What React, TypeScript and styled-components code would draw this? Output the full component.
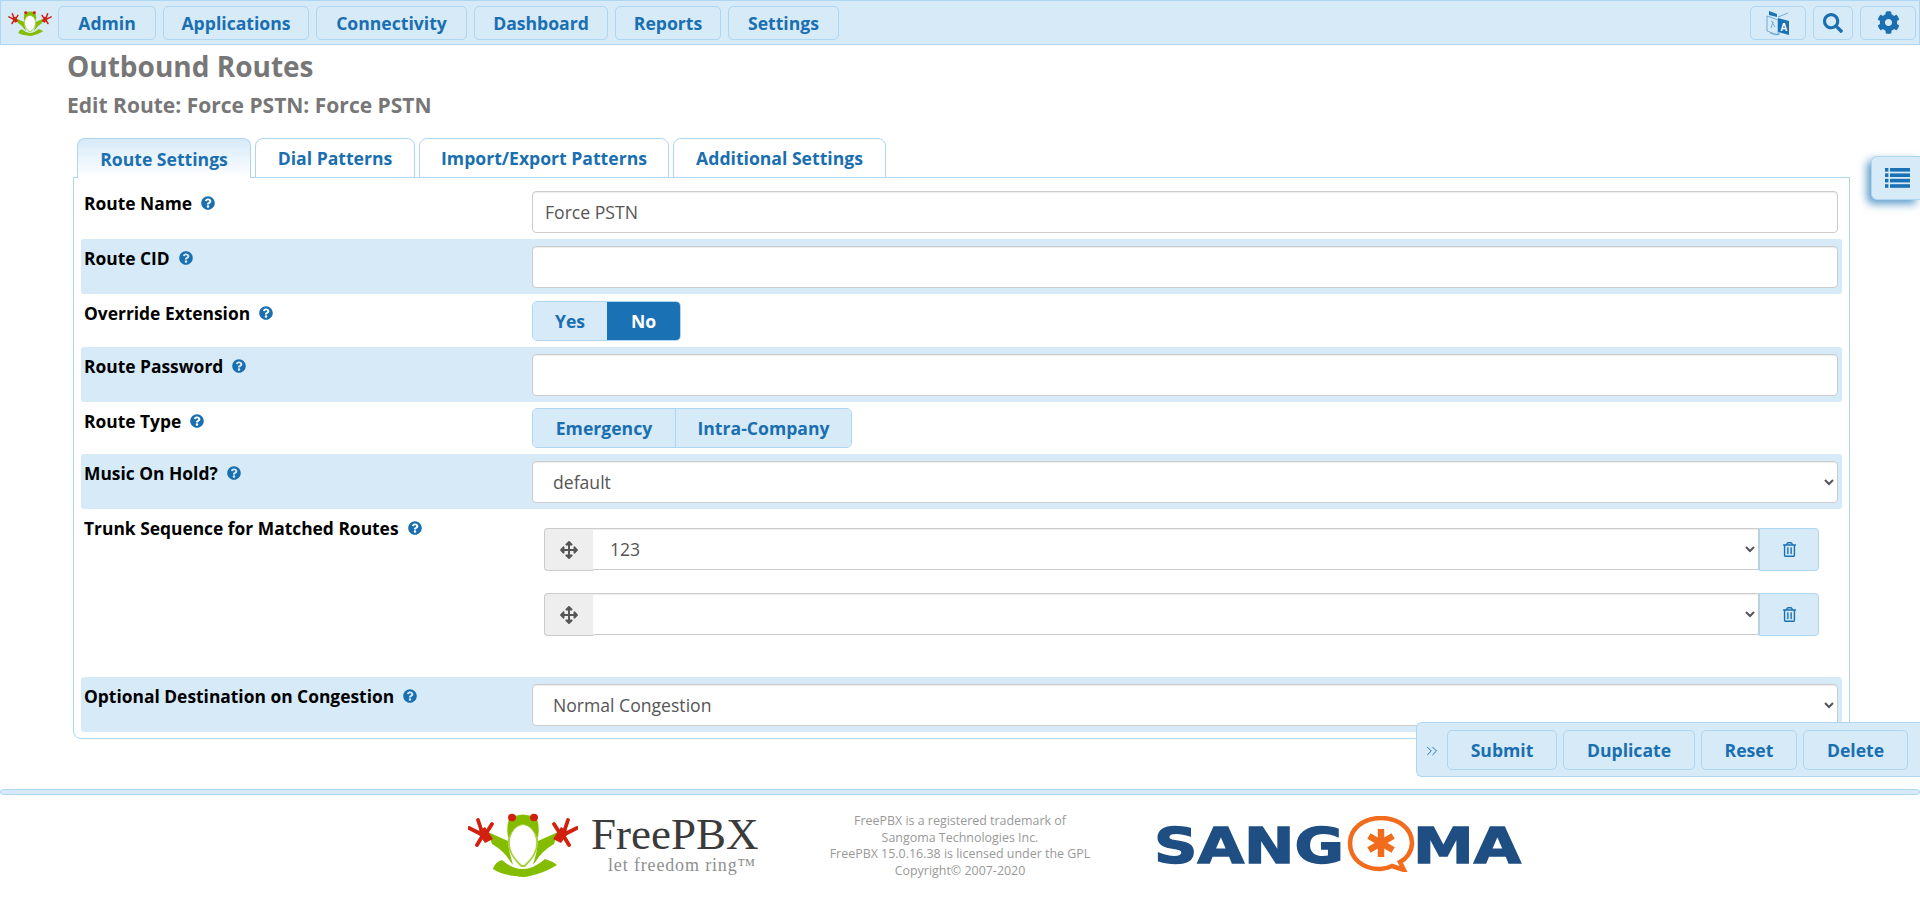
import styled, { createGlobalStyle } from 'styled-components'
import { FaQuestionCircle, FaSearch, FaCog, FaArrowsAlt, FaRegTrashAlt } from 'react-icons/fa'
import { ChevronsRight } from 'lucide-react'

const GlobalStyle = createGlobalStyle`
  html, body {
    margin: 0;
    padding: 0;
    background: #fff;
    font-family: "Open Sans", "Liberation Sans", sans-serif;
    overflow: hidden;
  }
  * { box-sizing: border-box; }
`

const Page = styled.div`
  position: relative;
  height: 913px;
  overflow: hidden;
`

const TopBar = styled.div`
  display: flex;
  align-items: center;
  height: 45px;
  padding: 0 3px 0 7px;
  background: #d6eaf8;
  border: 1px solid #aed6f1;
`

const NavLogo = styled.div`
  display: flex;
  width: 50px;
  margin-top: 1px;
`

const NavGroup = styled.div`
  display: flex;
  gap: 7px;
  margin-right: ${p => (p.$push ? 'auto' : '0')};
`

const NavButton = styled.div`
  display: flex;
  align-items: center;
  justify-content: center;
  width: ${p => p.$w}px;
  height: 34px;
  border: 1px solid #aed6f1;
  border-radius: 5px;
  background: #d6eaf8;
  color: #1a6fb0;
  font-size: ${p => p.$size || 17.6}px;
  font-weight: 700;
`

const Header = styled.div`
  padding: 0 0 0 67px;
`

const Title = styled.h1`
  margin: 0;
  padding-top: 3px;
  height: 40px;
  font-size: 28px;
  line-height: 36px;
  font-weight: 700;
  color: #777;
`

const SubTitle = styled.h2`
  margin: 0;
  height: 53px;
  padding-top: 7px;
  font-size: 21px;
  line-height: 26px;
  font-weight: 700;
  color: #777;
`

const Tabs = styled.div`
  display: flex;
  gap: 4px;
  margin-left: 77px;
  position: relative;
  z-index: 1;
`

const Tab = styled.div`
  display: flex;
  align-items: center;
  justify-content: center;
  width: ${p => p.$w}px;
  height: 40px;
  border: 1px solid #aed6f1;
  border-bottom: ${p => (p.$active ? '0' : '1px solid #aed6f1')};
  border-radius: 8px 8px 0 0;
  background: ${p => (p.$active ? 'linear-gradient(#d6eaf8, #fff)' : '#fff')};
  color: #1a6fb0;
  font-size: 17.6px;
  font-weight: 700;
`

const Panel = styled.div`
  width: 1777px;
  margin: -1px 0 0 73px;
  padding: 6px 7px 6px;
  border: 1px solid #aed6f1;
  border-radius: 0 0 8px 8px;
`

const Row = styled.div`
  display: grid;
  grid-template-columns: 448px 1fr;
  height: ${p => p.$h}px;
  padding: 6px 4px 0 3px;
  border-radius: 3px;
  background: ${p => (p.$shade ? '#d6eaf8' : 'transparent')};
`

const Label = styled.div`
  display: flex;
  align-items: center;
  gap: 9px;
  height: 24px;
  margin-top: 1px;
  font-size: 17.4px;
  font-weight: 700;
  white-space: nowrap;
  color: #000;
  svg { color: #1a6fb0; font-size: 14px; }
`

const TextInput = styled.input`
  width: 100%;
  height: 42px;
  margin-top: 1px;
  padding: 0 12px;
  border: 1px solid #ccc;
  border-radius: 4px;
  background: #fff;
  box-shadow: inset 0 1px 1px rgba(0, 0, 0, 0.075);
  color: #555;
  font-family: inherit;
  font-size: 17.6px;
  outline: none;
`

const Select = styled.select`
  width: 100%;
  height: 42px;
  margin-top: 1px;
  padding: 0 ${p => (p.$pad ? p.$pad : 16)}px;
  border: 1px solid #ccc;
  border-radius: 4px;
  background-color: #fff;
  box-shadow: inset 0 1px 1px rgba(0, 0, 0, 0.075);
  color: #555;
  font-family: inherit;
  font-size: 17.6px;
  outline: none;
`

const Toggle = styled.div`
  display: flex;
  width: max-content;
  height: 40px;
  margin-top: ${p => p.$mt || 0}px;
  border: 1px solid #aed6f1;
  border-radius: 5px;
  overflow: hidden;
`

const ToggleItem = styled.div`
  display: flex;
  align-items: center;
  justify-content: center;
  width: ${p => p.$w}px;
  background: ${p => (p.$on ? '#1a72b5' : '#d6eaf8')};
  color: ${p => (p.$on ? '#fff' : '#1a6fb0')};
  border-left: ${p => (p.$split ? '1px solid #aed6f1' : '0')};
  font-size: 17.6px;
  font-weight: 700;
`

const TrunkList = styled.div`
  display: flex;
  flex-direction: column;
  gap: 22px;
  padding: 13px 19px 0 12px;
`

const TrunkGroup = styled.div`
  display: flex;
  height: 43px;
`

const DragHandle = styled.div`
  display: flex;
  flex: 0 0 49px;
  align-items: center;
  justify-content: center;
  border: 1px solid #ccc;
  border-right: 0;
  border-radius: 4px 0 0 4px;
  background: #eee;
  color: #555;
  font-size: 18px;
`

const TrunkSelect = styled(Select)`
  flex: 1;
  width: auto;
  min-width: 0;
  height: 42px;
  margin-top: 0;
  border-left: 0;
  border-radius: 0;
`

const TrashAddon = styled.div`
  display: flex;
  flex: 0 0 60px;
  align-items: center;
  justify-content: center;
  border: 1px solid #aed6f1;
  border-radius: 0 4px 4px 0;
  background: #d6eaf8;
  color: #1a72b5;
  font-size: 15px;
`

const SideTab = styled.div`
  position: absolute;
  top: 156px;
  right: 0;
  display: flex;
  align-items: center;
  justify-content: flex-end;
  width: 49px;
  height: 44px;
  padding-right: 10px;
  border: 1px solid #aed6f1;
  border-right: 0;
  border-radius: 6px 0 0 6px;
  background: #d6eaf8;
  box-shadow: -4px 4px 8px rgba(26, 114, 181, 0.7);
`

const ActionBar = styled.div`
  position: absolute;
  top: 722px;
  right: 0;
  display: flex;
  align-items: center;
  gap: 6px;
  width: 504px;
  height: 55px;
  padding-left: 6px;
  border: 1px solid #aed6f1;
  border-right: 0;
  border-radius: 6px 0 0 6px;
  background: #d6eaf8;
  z-index: 2;
`

const CollapseArrow = styled.div`
  display: flex;
  width: 18px;
  margin-top: 2px;
  margin-right: 0;
  color: #1a72b5;
`

const ActionButton = styled(NavButton)`
  height: 40px;
`

const FooterBar = styled.div`
  height: 6px;
  margin-top: 50px;
  border: 1px solid #aed6f1;
  border-radius: 3px;
  background: #d6eaf8;
`

const Footer = styled.div`
  display: flex;
  align-items: flex-start;
  padding: 18px 0 0 468px;
`

const FreePbxLogo = styled.div`
  display: flex;
  gap: 13px;
  width: 288px;
`

const BrandText = styled.div`
  display: flex;
  flex-direction: column;
`

const BrandName = styled.div`
  height: 43px;
  font-family: "Liberation Serif", serif;
  font-size: 45px;
  line-height: 42px;
  color: #3b3b3b;
`

const BrandTag = styled.div`
  margin-left: 17px;
  font-family: "Liberation Serif", serif;
  font-size: 18px;
  line-height: 18px;
  letter-spacing: 0.85px;
  white-space: nowrap;
  color: #8f8f8f;
`

const Legal = styled.div`
  width: 270px;
  margin: 0 62px 0 69px;
  text-align: center;
  font-size: 12.45px;
  line-height: 16.7px;
  white-space: nowrap;
  color: #999;
`

const SangomaSvg = styled.svg`
  display: block;
  margin-top: 3px;
  margin-left: -3px;
`

function Frog({ width, height }: { width: number; height: number }) {
  const hand = (
    <g stroke="#d2200f" strokeWidth="3.8" strokeLinecap="round" fill="#d2200f">
      <path d="M9 19 L17 14 L25 26 L17 30 Z" stroke="none" />
      <path d="M15 22 L1 15 M15 22 L10 7 M17 22 L24 11 M15 22 L9 32" fill="none" />
    </g>
  )
  const arm = <path d="M20 19 L40 28 Q41 40 45 52 L42 48 Q36 38 24 31 Z" fill="#84bd00" />
  return (
    <svg width={width} height={height} viewBox="0 0 110 64" style={{ flex: 'none' }}>
      {arm}
      <g transform="translate(110 0) scale(-1 1)">{arm}</g>
      <path d="M55 11 Q67 12 70 26 Q72 40 57 54 L53 54 Q38 40 40 26 Q43 12 55 11 Z" fill="#a4d13c" />
      <path d="M55 12 Q65 13 68 26 Q70 40 56 52 L54 52 Q40 40 42 26 Q45 13 55 12 Z" fill="#fff" />
      <path d="M40 25 Q38 10 42 5 Q55 -2 68 5 Q72 10 70 25 Q64 12 55 11 Q46 12 40 25 Z" fill="#84bd00" />
      <path
        d="M25 56 Q27 49 34 47 Q44 56 54 56 Q66 56 77 46 Q84 48 89 52 Q76 60 62 63 Q55 65 48 63 Q34 62 25 56 Z"
        fill="#84bd00"
      />
      {hand}
      <g transform="translate(110 0) scale(-1 1)">{hand}</g>
      <ellipse cx="44" cy="4.5" rx="4" ry="3.8" fill="#d2200f" />
      <ellipse cx="66" cy="4.5" rx="4" ry="3.8" fill="#d2200f" />
    </svg>
  )
}

function TranslateIcon() {
  return (
    <svg width="24" height="26" viewBox="0 0 24 26">
      <path d="M1 6 L12 10 V25 L1 21 Z" fill="none" stroke="#5b9bd0" strokeWidth="0.8" />
      <path d="M3 1 L11 4 V7 L3 5 Z" fill="#1a72b5" />
      <path d="M12 7 L22 3 V3" fill="none" stroke="#5b9bd0" strokeWidth="0.8" />
      <path d="M12 8 L23 11 V25 L12 22 Z" fill="#1a72b5" />
      <path d="M5 11 L8 13 M7 12 L5 18 M7 14 L9 17" fill="none" stroke="#5b9bd0" strokeWidth="0.8" />
      <path d="M4 23 Q9 26 14 24" fill="none" stroke="#5b9bd0" strokeWidth="0.8" />
      <text x="14.2" y="21" fontFamily="Liberation Sans, sans-serif" fontWeight="700" fontSize="10" fill="#fff">
        A
      </text>
    </svg>
  )
}

function ListIcon() {
  const rows = [0, 5.4, 10.8, 16.2]
  return (
    <svg width="25" height="20" viewBox="0 0 25 20">
      {rows.map(y => (
        <g key={y} fill="#1a72b5">
          <rect x="0" y={y} width="3.4" height="3.6" />
          <rect x="5" y={y} width="20" height="3.6" />
        </g>
      ))}
    </svg>
  )
}

function SangomaLogo() {
  const spokes = [0, 60, 120]
  return (
    <SangomaSvg width="368" height="56" viewBox="0 0 368 56">
      <g
        fontFamily="DejaVu Sans, sans-serif"
        fontWeight="700"
        fontSize="50"
        fill="#1f4e82"
        stroke="#1f4e82"
        strokeWidth="1.4"
      >
        <text x="0" y="47" textLength="190" lengthAdjust="spacingAndGlyphs">SANG</text>
        <text x="259" y="47" textLength="108" lengthAdjust="spacingAndGlyphs">MA</text>
      </g>
      <path
        d="M227 2 C245 2 258 13 258 27 C258 36 252 43 246 46 L250 54 L238 50 C234 52 230 53 226 53 C208 53 196 42 196 27 C196 13 209 2 227 2 Z"
        fill="#fff"
        stroke="#f26c1d"
        strokeWidth="4.5"
      />
      <g stroke="#f26c1d" strokeWidth="6.5">
        {spokes.map(a => (
          <path key={a} d="M227 13 V41" transform={`rotate(${a} 227 27)`} />
        ))}
      </g>
    </SangomaSvg>
  )
}

function Help({ label }: { label: string }) {
  return (
    <Label>
      {label}
      <FaQuestionCircle />
    </Label>
  )
}

function TrunkRow({ value }: { value: string }) {
  return (
    <TrunkGroup>
      <DragHandle>
        <FaArrowsAlt />
      </DragHandle>
      <TrunkSelect $pad={13} defaultValue={value}>
        <option value={value}>{value}</option>
      </TrunkSelect>
      <TrashAddon>
        <FaRegTrashAlt />
      </TrashAddon>
    </TrunkGroup>
  )
}

export default function App() {
  const navItems: [string, number][] = [
    ['Admin', 98],
    ['Applications', 146],
    ['Connectivity', 151],
    ['Dashboard', 134],
    ['Reports', 106],
    ['Settings', 111],
  ]
  const tabs: [string, number][] = [
    ['Route Settings', 174],
    ['Dial Patterns', 160],
    ['Import/Export Patterns', 250],
    ['Additional Settings', 213],
  ]
  const actions: [string, number][] = [
    ['Submit', 110],
    ['Duplicate', 132],
    ['Reset', 96],
    ['Delete', 105],
  ]

  return (
    <Page>
      <GlobalStyle />
      <TopBar>
        <NavLogo>
          <Frog width={44} height={25} />
        </NavLogo>
        <NavGroup $push>
          {navItems.map(([name, w]) => (
            <NavButton key={name} $w={w}>
              {name}
            </NavButton>
          ))}
        </NavGroup>
        <NavGroup>
          <NavButton $w={56}>
            <TranslateIcon />
          </NavButton>
          <NavButton $w={40} $size={20}>
            <FaSearch />
          </NavButton>
          <NavButton $w={56} $size={23}>
            <FaCog />
          </NavButton>
        </NavGroup>
      </TopBar>

      <Header>
        <Title>Outbound Routes</Title>
        <SubTitle>Edit Route: Force PSTN: Force PSTN</SubTitle>
      </Header>

      <Tabs>
        {tabs.map(([name, w], i) => (
          <Tab key={name} $w={w} $active={i === 0}>
            {name}
          </Tab>
        ))}
      </Tabs>

      <Panel>
        <Row $h={55}>
          <Help label="Route Name" />
          <TextInput defaultValue="Force PSTN" />
        </Row>
        <Row $h={55} $shade>
          <Help label="Route CID" />
          <TextInput />
        </Row>
        <Row $h={53}>
          <Help label="Override Extension" />
          <Toggle $mt={1}>
            <ToggleItem $w={74}>Yes</ToggleItem>
            <ToggleItem $w={73} $on>
              No
            </ToggleItem>
          </Toggle>
        </Row>
        <Row $h={55} $shade>
          <Help label="Route Password" />
          <TextInput />
        </Row>
        <Row $h={52}>
          <Help label="Route Type" />
          <Toggle>
            <ToggleItem $w={142}>Emergency</ToggleItem>
            <ToggleItem $w={176} $split>
              Intra-Company
            </ToggleItem>
          </Toggle>
        </Row>
        <Row $h={55} $shade>
          <Help label="Music On Hold?" />
          <Select defaultValue="default">
            <option value="default">default</option>
          </Select>
        </Row>
        <Row $h={168}>
          <Help label="Trunk Sequence for Matched Routes" />
          <TrunkList>
            <TrunkRow value="123" />
            <TrunkRow value="" />
          </TrunkList>
        </Row>
        <Row $h={55} $shade>
          <Help label="Optional Destination on Congestion" />
          <Select defaultValue="normal">
            <option value="normal">Normal Congestion</option>
          </Select>
        </Row>
      </Panel>

      <SideTab>
        <ListIcon />
      </SideTab>

      <ActionBar>
        <CollapseArrow>
          <ChevronsRight size={18} strokeWidth={1.3} />
        </CollapseArrow>
        {actions.map(([name, w]) => (
          <ActionButton key={name} $w={w}>
            {name}
          </ActionButton>
        ))}
      </ActionBar>

      <FooterBar />

      <Footer>
        <FreePbxLogo>
          <Frog width={110} height={64} />
          <BrandText>
            <BrandName>FreePBX</BrandName>
            <BrandTag>let freedom ring™</BrandTag>
          </BrandText>
        </FreePbxLogo>
        <Legal>
          FreePBX is a registered trademark of
          <br />
          Sangoma Technologies Inc.
          <br />
          FreePBX 15.0.16.38 is licensed under the GPL
          <br />
          Copyright© 2007-2020
        </Legal>
        <SangomaLogo />
      </Footer>
    </Page>
  )
}
